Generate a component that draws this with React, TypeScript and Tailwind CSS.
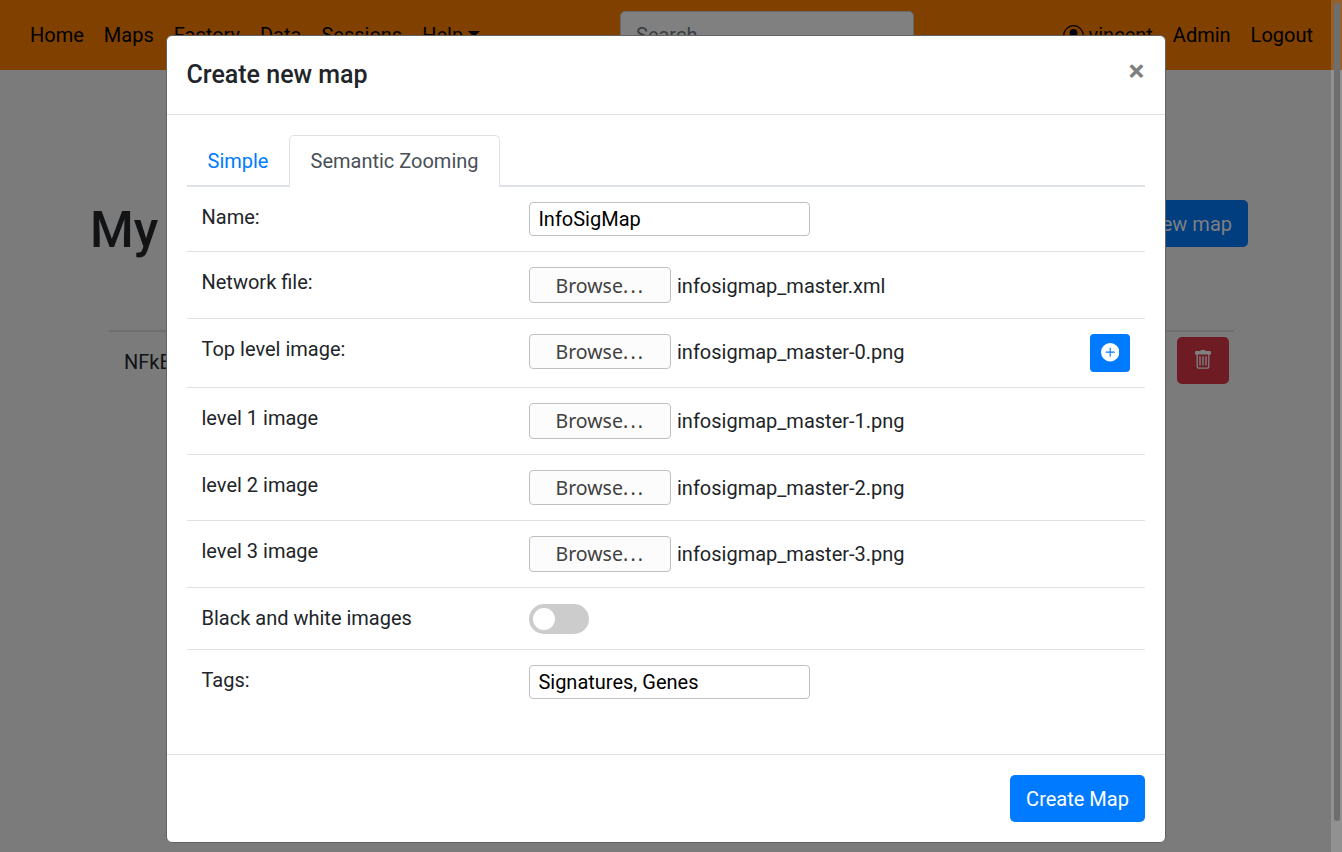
import React from "react";

function FileRow({ label, file, height, btn, text = "pt-[3px]", add = false }: { label: string; file: string; height: string; btn: string; text?: string; add?: boolean }) {
  return (
    <div className={`flex shrink-0 border-b border-[#dee2e6] ${height}`}>
      <div className="w-[342px] shrink-0 pl-[14.5px] pt-[15px]">{label}</div>
      <div className="flex items-start pt-[15px]">
        <button className={`w-[142px] shrink-0 rounded border border-[#bfbfc3] bg-[#fcfcfc] font-['Noto_Sans',sans-serif] text-[19.5px] text-[#414141] ${btn}`}>
          Browse<span className="inline-block w-[21.5px] text-left tracking-[2.2px]">...</span>
        </button>
        <span className={`ml-1.5 ${text}`}>{file}</span>
      </div>
      {add && (
        <button className="mr-[15px] mt-[15px] ml-auto flex h-[38px] w-10 items-start rounded bg-[#007bff] pt-[9.3px] pl-[10.6px] text-white">
          <svg className="h-[18.4px] w-[18.4px]" viewBox="0 0 16 16" fill="currentColor">
            <path d="M16 8A8 8 0 1 1 0 8a8 8 0 0 1 16 0zM8.5 4.5a.5.5 0 0 0-1 0v3h-3a.5.5 0 0 0 0 1h3v3a.5.5 0 0 0 1 0v-3h3a.5.5 0 0 0 0-1h-3v-3z" />
          </svg>
        </button>
      )}
    </div>
  );
}

function PageBehind() {
  return (
    <div className="flex h-full bg-[#7b7b7b]">
      <div className="min-w-0 flex-1">
        <nav className="flex h-[70px] items-start bg-[#804000] text-black">
          <div className="flex w-[620px] gap-5 pl-[30px] pt-5 whitespace-nowrap">
            <span>Home</span><span>Maps</span><span>Factory</span><span>Data</span><span>Sessions</span>
            <span className="flex">Help<span className="mt-[11px] ml-[5px] h-0 w-0 border-x-[6px] border-t-[6px] border-x-transparent border-t-black" /></span>
          </div>
          <div className="mt-[11px] h-[47px] w-[294px] rounded-[5px] border border-[#67696b] bg-[#808080] px-[15px] pt-2 text-[#393d40]">Search</div>
          <div className="ml-auto flex gap-5 pr-[18px] pt-5">
            <span className="flex">
              <svg className="mt-[5px] mr-[5px] h-[21px] w-[21px]" viewBox="0 0 20 20">
                <circle cx="10" cy="10" r="9.3" fill="none" stroke="currentColor" strokeWidth="1.2" />
                <ellipse cx="10" cy="7.8" rx="3.7" ry="4" fill="currentColor" />
                <path d="M3.4 16.5c2-4.5 11.2-4.5 13.2 0a9.2 9.2 0 0 1-13.2 0z" fill="currentColor" />
              </svg>
              vincent
            </span>
            <span>Admin</span><span>Logout</span>
          </div>
        </nav>
        <div className="flex justify-between pr-[83px] pl-[90px] pt-[130px]">
          <h1 className="text-[50px] leading-[60px] font-medium text-[#111315]">My</h1>
          <button className="h-[47px] rounded-[5px] bg-[#003e80] px-4 text-[#808080]">New map</button>
        </div>
        <div className="mr-[97px] ml-[109px] mt-[70px] flex h-[60px] border-t-2 border-[#6c6e70] text-[#111315]">
          <div className="flex-1 pl-[15px] pt-[15px]">NFkB</div>
          <div className="mt-[6px] mr-[6px] h-[45px] w-10 rounded-[5px] bg-[#787b79]" />
          <button className="mt-[5px] mr-[5px] flex h-[47px] w-[52px] items-start justify-center rounded-[5px] bg-[#6e1b23] pt-[13px] text-[#808080]">
            <svg className="h-[19px] w-4" viewBox="0 0 16 19" fill="none" stroke="currentColor">
              <path d="M0 1.9Q0 1 1 1H5.2Q5.6 0 6.4 0H9.6Q10.4 0 10.8 1H15Q16 1 16 1.9V4.6H0Z" fill="currentColor" stroke="none" />
              <path d="M2.2 4v12.2q0 1.9 1.8 1.9h8q1.8 0 1.8-1.9V4" strokeWidth="1.3" />
              <path d="M5 6.3v9.2M8 6.3v9.2M11 6.3v9.2" strokeWidth="1.4" />
            </svg>
          </button>
        </div>
      </div>
      <div className="flex h-full w-[11px] justify-end bg-linear-to-b from-[#93602e] from-[70px] to-[#919191] to-[70px] pr-[2px] pt-[3px]">
        <div className="h-[818px] w-[6px] rounded-full bg-[#6e6e6e]" />
      </div>
    </div>
  );
}

export default function App() {
  return (
    <div className="relative h-[852px] w-[1342px] overflow-hidden font-['Roboto',sans-serif] text-[20px] leading-[30px] text-[#212529]">
      <PageBehind />
      <section role="dialog" className="absolute top-[35px] left-[166px] flex h-[808px] w-[1000px] flex-col rounded-md border border-[#636363] bg-white">
        <header className="flex h-[79px] shrink-0 justify-between border-b border-[#dee2e6] pt-[19px] pr-[20.5px] pl-[19.5px]">
          <h5 className="pt-px text-[25px] leading-[38px] font-medium">Create new map</h5>
          <button className="flex h-[32px] items-center text-[30px] leading-[30px] font-bold text-[#7f7f7f]">×</button>
        </header>
        <div className="flex h-[639px] shrink-0 flex-col px-5 pt-5">
          <div className="flex h-[52px] shrink-0 border-b-2 border-[#dee2e6]">
            <div className="w-[102px] pl-[20.5px] pt-[11px] text-[#007bff]">Simple</div>
            <div className="h-[52px] w-[211px] rounded-t-[5px] border border-b-0 border-[#dee2e6] bg-white pt-[10px] pl-[20.5px] text-[#495057]">Semantic Zooming</div>
          </div>
          <div className="flex h-[65px] shrink-0 border-b border-[#dee2e6]">
            <div className="w-[342px] pl-[14.5px] pt-[15px]">Name:</div>
            <input className="mt-[15px] h-[34px] w-[281px] rounded border border-[#bfbfc3] px-[8.4px] text-black" defaultValue="InfoSigMap" />
          </div>
          <FileRow label="Network file:" file="infosigmap_master.xml" height="h-[67px]" btn="h-9 leading-[36px]" text="pt-1" />
          <FileRow label="Top level image:" file="infosigmap_master-0.png" height="h-[69px]" btn="h-[35px] leading-[34px]" add />
          <FileRow label="level 1 image" file="infosigmap_master-1.png" height="h-[67px]" btn="h-9 leading-[34px]" />
          <FileRow label="level 2 image" file="infosigmap_master-2.png" height="h-[66px]" btn="h-[35px] leading-[34px]" />
          <FileRow label="level 3 image" file="infosigmap_master-3.png" height="h-[67px]" btn="h-9 leading-[34px]" />
          <div className="flex h-[62px] shrink-0 border-b border-[#dee2e6]">
            <div className="w-[342px] pl-[14.5px] pt-[15px]">Black and white images</div>
            <div className="mt-4 flex h-[30px] w-[60px] items-center rounded-full bg-[#ccc] px-1">
              <div className="h-[22px] w-[22px] rounded-full bg-white" />
            </div>
          </div>
          <div className="flex">
            <div className="w-[342px] pl-[14.5px] pt-[15px]">Tags:</div>
            <input className="mt-[15px] h-[34px] w-[281px] rounded border border-[#bfbfc3] px-[8.4px] text-black" defaultValue="Signatures, Genes" />
          </div>
        </div>
        <footer className="flex flex-1 justify-end border-t border-[#dee2e6] pt-5 pr-5">
          <button className="h-[47px] w-[135px] rounded-[5px] bg-[#007bff] text-white">Create Map</button>
        </footer>
      </section>
    </div>
  );
}
